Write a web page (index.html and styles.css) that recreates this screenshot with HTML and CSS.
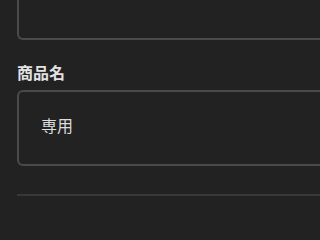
FILE: index.html
```html
<!DOCTYPE html>
<html lang="ja">
<head>
<meta charset="utf-8">
<link rel="stylesheet" href="styles.css">
</head>
<body>
<div class="page">
  <div class="field-box top-box"></div>
  <div class="label">商品名</div>
  <div class="field-box value-box">専用</div>
  <div class="divider"></div>
</div>
</body>
</html>
```
FILE: styles.css
```css
html, body {
  margin: 0;
  padding: 0;
  background: #222222;
}
.page {
  padding-left: 17px;
  font-family: "Noto Sans CJK JP", "Noto Sans", sans-serif;
}
.field-box {
  box-sizing: border-box;
  border: 2px solid #4a4a4a;
  border-right: none;
  border-radius: 6px 0 0 6px;
}
.top-box {
  height: 40px;
  border-top: none;
  border-radius: 0 0 0 6px;
}
.label {
  margin-top: 20px;
  font-size: 16px;
  font-weight: bold;
  line-height: 24px;
  color: #e2e2e2;
}
.value-box {
  margin-top: 6px;
  height: 76px;
  padding: 21px 22px 0;
  font-size: 16px;
  line-height: 24px;
  color: #dcdcdc;
}
.divider {
  margin-top: 28px;
  height: 2px;
  background: #383838;
}
```
